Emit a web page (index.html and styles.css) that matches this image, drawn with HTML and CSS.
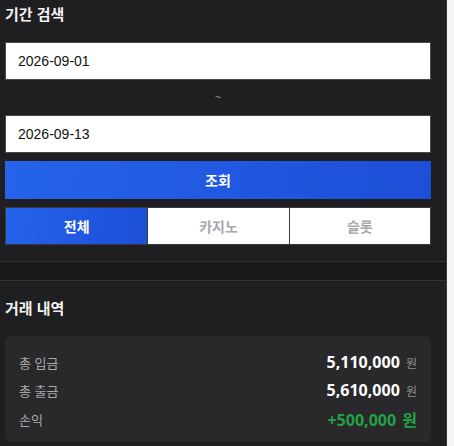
FILE: index.html
```html
<html lang="ko">
    <head>
        <meta charset="UTF-8">
        <meta name="viewport" content="width=device-width, initial-scale=1.0">
        <title>기간 검색</title>
        <link rel="stylesheet" href="styles.css">
    </head>
    <body>
        <div class="wrap">
            <section class="panel search">
                <h2 class="title">기간 검색</h2>
                <input class="date" type="text" value="2026-09-01">
                <div class="tilde">~</div>
                <input class="date" type="text" value="2026-09-13">
                <button class="search-btn">조회</button>
                <div class="tabs">
                    <button class="tab active">전체</button>
                    <button class="tab">카지노</button>
                    <button class="tab">슬롯</button>
                </div>
            </section>
            <div class="gap"></div>
            <section class="panel history">
                <h2 class="title">거래 내역</h2>
                <div class="summary">
                    <div class="row">
                        <span class="label">총 입금</span>
                        <span class="value">5,110,000 <small>원</small></span>
                    </div>
                    <div class="row">
                        <span class="label">총 출금</span>
                        <span class="value">5,610,000 <small>원</small></span>
                    </div>
                    <div class="row">
                        <span class="label">손익</span>
                        <span class="value plus">+500,000 <small>원</small></span>
                    </div>
                </div>
            </section>
        </div>
    </body>
</html>
```

FILE: styles.css
```css
body {
    margin: 0;
    padding: 0;
    background-color: #f4f4f6;
    font-family: 'Noto Sans CJK KR', 'Noto Sans', sans-serif;
}
.wrap {
    width: 446px;
    height: 446px;
    display: flex;
    flex-direction: column;
    overflow: hidden;
    background-color: #19181b;
    border-right: 1px solid #3a3a3d;
}
.panel {
    background-color: #1f1e21;
    padding: 0 15px 0 5px;
}
.search {
    display: flex;
    flex-direction: column;
    padding-top: 3px;
    padding-bottom: 16px;
    border-bottom: 1px solid #333236;
}
.gap {
    height: 18px;
    flex-shrink: 0;
}
.history {
    flex: 1;
    border-top: 1px solid #333236;
    padding-top: 16px;
}
.title {
    margin: 0;
    font-size: 15px;
    line-height: 22px;
    font-weight: 700;
    color: #f2f2f2;
}
.search .title {
    margin-bottom: 17px;
}
.date {
    height: 38px;
    box-sizing: border-box;
    border: 1px solid #4a4a4e;
    background: #ffffff;
    padding: 0 12px;
    font-family: 'Liberation Sans', Arial, sans-serif;
    font-size: 14px;
    color: #111;
    outline: none;
}
.tilde {
    height: 35px;
    line-height: 35px;
    text-align: center;
    font-family: 'Liberation Sans', Arial, sans-serif;
    font-size: 10px;
    color: #9a9a9e;
}
.search-btn {
    margin-top: 8px;
    height: 38px;
    border: none;
    background: linear-gradient(100deg, #2563eb, #1d4ed8);
    color: #ffffff;
    font-family: 'Noto Sans CJK KR', sans-serif;
    font-size: 14px;
    font-weight: 700;
}
.tabs {
    margin-top: 8px;
    display: grid;
    grid-template-columns: 1fr 1fr 1fr;
    border: 1px solid #3a3a3e;
    height: 38px;
    box-sizing: border-box;
}
.tab {
    border: none;
    border-left: 1px solid #3a3a3e;
    background: #ffffff;
    color: #a8a8ab;
    font-family: 'Noto Sans CJK KR', sans-serif;
    font-size: 14px;
    font-weight: 700;
}
.tab:first-child {
    border-left: none;
}
.tab.active {
    background: linear-gradient(100deg, #2563eb, #1d4ed8);
    color: #ffffff;
}
.history .title {
    margin-bottom: 17px;
}
.summary {
    background-color: #29282b;
    border-radius: 6px;
    padding: 12px 14px 8px 14px;
}
.row {
    display: flex;
    justify-content: space-between;
    align-items: center;
    height: 28px;
}
.row:last-child {
    height: 30px;
}
.label {
    font-size: 13px;
    color: #a9a9ad;
}
.value {
    font-family: 'Noto Sans', sans-serif;
    font-size: 16px;
    font-weight: 700;
    color: #ffffff;
}
.value small {
    font-family: 'Noto Sans CJK KR', sans-serif;
    font-size: 12px;
    font-weight: 400;
    color: #8e8e92;
    margin-left: 2px;
}
.value.plus,
.value.plus small {
    color: #22a045;
}
.value.plus small {
    font-size: 16px;
    font-weight: 700;
}
```
